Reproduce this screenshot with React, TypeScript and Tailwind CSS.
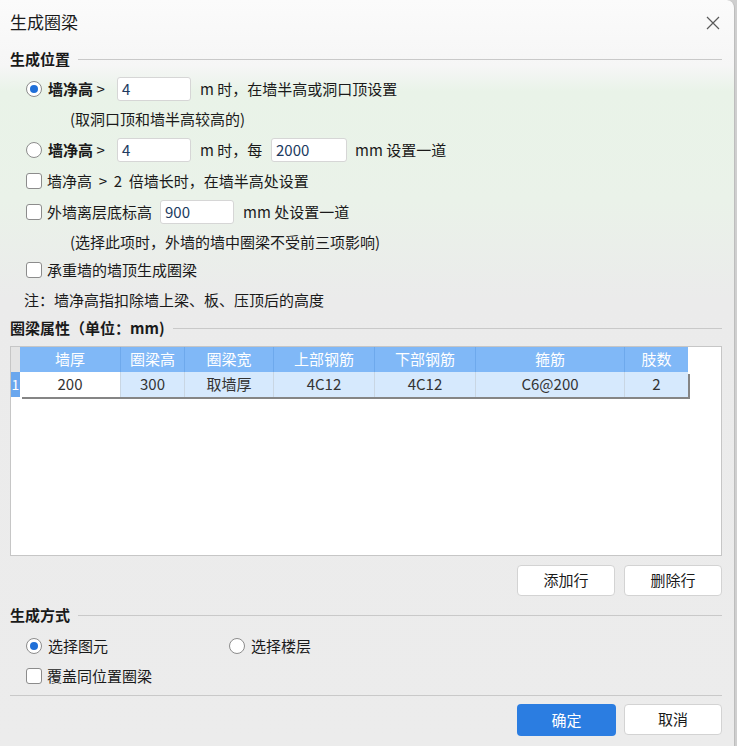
const font = "font-['Microsoft_YaHei','Noto_Sans_CJK_SC',sans-serif]";

function Radio({ checked }: { checked?: boolean }) {
  return (
    <span className="flex h-[16px] w-[16px] shrink-0 items-center justify-center rounded-full border border-[#8c8c8c] bg-white">
      {checked && <span className="h-[8px] w-[8px] rounded-full bg-[#1f6fd8]" />}
    </span>
  );
}

function Check() {
  return <span className="h-[16px] w-[16px] shrink-0 rounded-[3px] border border-[#8c8c8c] bg-white" />;
}

function Field({ value, w }: { value: string; w: string }) {
  return (
    <span className={`flex h-[24px] ${w} items-center rounded-[3px] border border-[#d6d6d6] bg-white px-[4px] text-[#203a60]`}>
      {value}
    </span>
  );
}

function Section({ title, lineClass }: { title: string; lineClass?: string }) {
  return (
    <div className={`flex items-center gap-[8px] ${lineClass ?? ""}`}>
      <span className="font-semibold">{title}</span>
      <span className="h-px flex-1 bg-[#c9c9c9]" />
    </div>
  );
}

function Btn({ label, primary }: { label: string; primary?: boolean }) {
  return (
    <button
      className={
        primary
          ? "flex h-[32px] w-[99px] items-center justify-center rounded-[4px] bg-[#2b7de1] text-white"
          : "flex h-[31px] w-[98px] items-center justify-center rounded-[4px] border border-[#d3d3d3] bg-white text-[#1a1a1a]"
      }
    >
      {label}
    </button>
  );
}

export default function App() {
  const cols = ["墙厚", "圈梁高", "圈梁宽", "上部钢筋", "下部钢筋", "箍筋", "肢数"];
  const row = ["200", "300", "取墙厚", "4C12", "4C12", "C6@200", "2"];
  const grid = "grid grid-cols-[101px_64px_89px_101px_101px_149px_63px]";

  return (
    <div className={`h-[746px] w-[737px] overflow-hidden bg-[#cfcfcf] ${font} text-[15px] text-[#1a1a1a]`}>
      <div className="flex h-full w-[735px] flex-col rounded-tr-[8px] border-r border-[#bdbdbd] bg-[linear-gradient(to_bottom,#fbfbfb_0px,#f6f6f6_66px,#e9f3e8_92px,#eaf2e9_200px,#ebebeb_300px,#ececec_100%)]">
        {/* title bar */}
        <div className="flex h-[44px] shrink-0 items-center justify-between pl-[10px] pr-[14px]">
          <span className="text-[17px]">生成圈梁</span>
          <svg width="14" height="14" viewBox="0 0 14 14" className="mt-[1px]">
            <path d="M1 1L13 13M13 1L1 13" stroke="#5a5a5a" strokeWidth="1.2" />
          </svg>
        </div>

        <div className="flex flex-col px-[10px] pr-[12px]">
          <div className="h-[30px]">
            <Section title="生成位置" lineClass="h-full" />
          </div>

          <div className="flex h-[30px] items-center pl-[16px]">
            <Radio checked />
            <span className="ml-[6px] w-[69px] font-semibold">墙净高 <span className="font-normal">&gt;</span></span>
            <Field value="4" w="w-[74px]" />
            <span className="ml-[9px]">m 时，在墙半高或洞口顶设置</span>
          </div>
          <div className="flex h-[30px] items-center pl-[60px]">(取洞口顶和墙半高较高的)</div>

          <div className="flex h-[32px] items-center pl-[16px]">
            <Radio />
            <span className="ml-[6px] w-[69px] font-semibold">墙净高 <span className="font-normal">&gt;</span></span>
            <Field value="4" w="w-[74px]" />
            <span className="ml-[9px] w-[71px]">m 时，每</span>
            <Field value="2000" w="w-[76px]" />
            <span className="ml-[8px]">mm 设置一道</span>
          </div>

          <div className="flex h-[30px] items-center pl-[16px]">
            <Check />
            <span className="ml-[5px] whitespace-pre">墙净高  &gt;  2  倍墙长时，在墙半高处设置</span>
          </div>

          <div className="flex h-[32px] items-center pl-[16px]">
            <Check />
            <span className="ml-[5px] w-[113px]">外墙离层底标高</span>
            <Field value="900" w="w-[74px]" />
            <span className="ml-[9px]">mm 处设置一道</span>
          </div>
          <div className="flex h-[28px] items-center pl-[60px]">(选择此项时，外墙的墙中圈梁不受前三项影响)</div>

          <div className="flex h-[28px] items-center pl-[16px]">
            <Check />
            <span className="ml-[5px]">承重墙的墙顶生成圈梁</span>
          </div>
          <div className="flex h-[32px] items-center pl-[14px]">注：墙净高指扣除墙上梁、板、压顶后的高度</div>

          <div className="h-[24px]">
            <Section title="圈梁属性（单位：mm)" lineClass="h-full" />
          </div>

          {/* table */}
          <div className="mt-[6px] h-[210px] border border-[#c6c6c6] bg-white">
            <div className="flex">
              <div className="flex flex-col">
                <div className="h-[25px] w-[9px] bg-[#e4e4e4]" />
                <div className="flex h-[25px] w-[9px] items-center justify-center bg-[#6aa7ee] text-[14px] text-white">1</div>
              </div>
              <div className="flex flex-col">
                <div className={`${grid} h-[25px] bg-[#80b8f7] text-white`}>
                  {cols.map((c) => (
                    <div key={c} className="flex items-center justify-center border-r border-[#6ea9ec] last:border-r-0">
                      {c}
                    </div>
                  ))}
                </div>
                <div className={`${grid} h-[25px] shadow-[2px_2px_0_0_#858585]`}>
                  {row.map((v, i) => (
                    <div
                      key={i}
                      className={`flex items-center justify-center border-r border-[#c9d6e3] text-[#333] last:border-r-0 ${i === 0 ? "bg-white" : "bg-[#d6e9fd]"}`}
                    >
                      {v}
                    </div>
                  ))}
                </div>
              </div>
            </div>
          </div>

          <div className="mt-[9px] flex justify-end gap-[9px]">
            <Btn label="添加行" />
            <Btn label="删除行" />
          </div>

          <div className="mt-[7px] h-[24px]">
            <Section title="生成方式" lineClass="h-full" />
          </div>

          <div className="mt-[4px] flex h-[30px] items-center pl-[16px]">
            <Radio checked />
            <span className="ml-[6px] w-[181px]">选择图元</span>
            <Radio />
            <span className="ml-[6px]">选择楼层</span>
          </div>
          <div className="flex h-[30px] items-center pl-[16px]">
            <Check />
            <span className="ml-[5px]">覆盖同位置圈梁</span>
          </div>

          <div className="mt-[4px] h-px bg-[#c9c9c9]" />

          <div className="mt-[8px] flex justify-end gap-[8px]">
            <Btn label="确定" primary />
            <Btn label="取消" />
          </div>
        </div>
      </div>
    </div>
  );
}
